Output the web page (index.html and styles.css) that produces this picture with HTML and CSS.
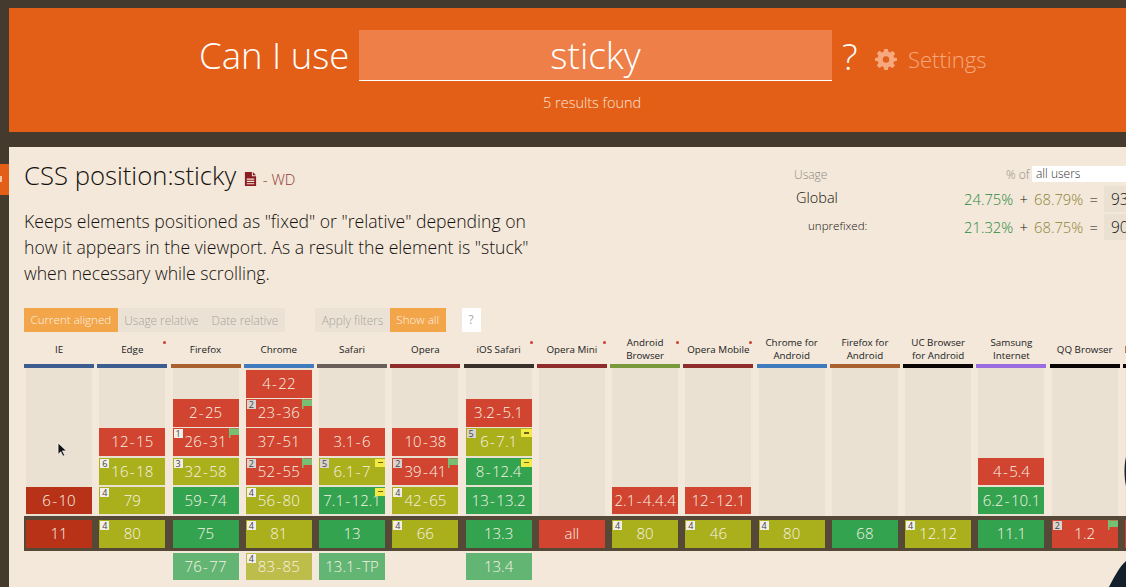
FILE: index.html
```html
<!DOCTYPE html>
<html lang="en">
<head>
    <meta charset="UTF-8">
    <meta name="viewport" content="width=device-width, initial-scale=1.0">
    <title>Can I use... sticky</title>
    <link rel="stylesheet" href="styles.css">
</head>
<body>
    <header class="site-header">
        <div class="search-row">
            <span class="can-i-use">Can I use</span>
            <div class="search-box">sticky</div>
            <span class="question">?</span>
            <svg class="gear" viewBox="0 0 24 24"><path fill-rule="evenodd" d="M10 1h4l.6 3.2 1.9.8 2.7-1.8 2.8 2.8-1.8 2.7.8 1.9L24 11v3l-3.2.6-.8 1.900 1.800 2.700-2.800 2.800-2.700-1.800-1.900.8L14 24h-4l-.6-3.200-1.900-.8-2.700 1.800L2 19l1.800-2.700-.8-1.900L0 14v-3l3-.6.8-1.900L2 5.800 4.800 3l2.700 1.800L9.400 4zM12 9a3.500 3.500 0 1 0 0 7 3.500 3.500 0 0 0 0-7z"/></svg>
            <span class="settings">Settings</span>
        </div>
        <div class="results">5 results found</div>
    </header>

    <div class="side-tab"></div>

    <main class="feature">
        <div class="feature-top">
            <div class="feature-info">
                <h1>CSS position:sticky
                    <svg class="doc-icon" viewBox="0 0 12 15"><path fill-rule="evenodd" d="M0 0h7.500v4.500H12V15H0zM8.500 0 12 3.500H8.500zM2 7h8v1.200H2zM2 9.500h8v1.200H2zM2 12h8v1.200H2z"/></svg>
                    <span class="status">- WD</span>
                </h1>
                <p class="description">Keeps elements positioned as "fixed" or "relative" depending on how it appears in the viewport. As a result the element is "stuck" when necessary while scrolling.</p>
            </div>
            <div class="usage">
                <div class="usage-head">
                    <span class="usage-label">Usage</span>
                    <span class="usage-of">% of</span>
                    <span class="usage-select">all users</span>
                </div>
                <div class="usage-row">
                    <span class="usage-name">Global</span>
                    <span class="pct-green">24.75%</span>
                    <span class="op">+</span>
                    <span class="pct-olive">68.79%</span>
                    <span class="op">=</span>
                    <span class="pct-total">93.54%</span>
                </div>
                <div class="usage-row">
                    <span class="usage-name sub">unprefixed:</span>
                    <span class="pct-green">21.32%</span>
                    <span class="op">+</span>
                    <span class="pct-olive">68.75%</span>
                    <span class="op">=</span>
                    <span class="pct-total">90.07%</span>
                </div>
            </div>
        </div>

        <div class="controls">
            <div class="btn-group">
                <span class="btn active">Current aligned</span>
                <span class="btn">Usage relative</span>
                <span class="btn">Date relative</span>
            </div>
            <div class="btn-group">
                <span class="btn">Apply filters</span>
                <span class="btn active">Show all</span>
            </div>
            <span class="help">?</span>
        </div>

        <div class="browsers">
            <div class="col">
                <div class="name">IE</div>
                <div class="bar blue-dark"></div>
                <div class="past">
                    <div class="cell dark-red">6 - 10</div>
                </div>
                <div class="current"><div class="cell dark-red">11</div></div>
            </div>

            <div class="col">
                <div class="name star">Edge</div>
                <div class="bar blue-dark"></div>
                <div class="past">
                    <div class="cell red">12 - 15</div>
                    <div class="cell yellow"><span class="note">6</span>16 - 18</div>
                    <div class="cell yellow"><span class="note">4</span>79</div>
                </div>
                <div class="current"><div class="cell yellow"><span class="note">4</span>80</div></div>
            </div>

            <div class="col">
                <div class="name">Firefox</div>
                <div class="bar orange"></div>
                <div class="past">
                    <div class="cell red">2 - 25</div>
                    <div class="cell red"><span class="note">1</span><svg class="flag" viewBox="0 0 10 10"><path d="M0 0h1.500v10H0zM1.500 .5H10v6.500H1.500z"/></svg>26 - 31</div>
                    <div class="cell yellow"><span class="note">3</span>32 - 58</div>
                    <div class="cell green">59 - 74</div>
                </div>
                <div class="current"><div class="cell green">75</div></div>
                <div class="future"><div class="cell green-light">76 - 77</div></div>
            </div>

            <div class="col">
                <div class="name">Chrome</div>
                <div class="bar blue"></div>
                <div class="past">
                    <div class="cell red">4 - 22</div>
                    <div class="cell red"><span class="note dim">2</span><svg class="flag" viewBox="0 0 10 10"><path d="M0 0h1.500v10H0zM1.500 .5H10v6.500H1.500z"/></svg>23 - 36</div>
                    <div class="cell red">37 - 51</div>
                    <div class="cell red"><span class="note dim">2</span><svg class="flag" viewBox="0 0 10 10"><path d="M0 0h1.500v10H0zM1.500 .5H10v6.500H1.500z"/></svg>52 - 55</div>
                    <div class="cell yellow"><span class="note">4</span>56 - 80</div>
                </div>
                <div class="current"><div class="cell yellow"><span class="note">4</span>81</div></div>
                <div class="future"><div class="cell yellow-light"><span class="note">4</span>83 - 85</div></div>
            </div>

            <div class="col">
                <div class="name">Safari</div>
                <div class="bar grey"></div>
                <div class="past">
                    <div class="cell red">3.1 - 6</div>
                    <div class="cell yellow"><span class="note dim">5</span><span class="minus"></span>6.1 - 7</div>
                    <div class="cell green"><span class="minus"></span>7.1 - 12.1</div>
                </div>
                <div class="current"><div class="cell green">13</div></div>
                <div class="future"><div class="cell green-light">13.1 - TP</div></div>
            </div>

            <div class="col">
                <div class="name">Opera</div>
                <div class="bar maroon"></div>
                <div class="past">
                    <div class="cell red">10 - 38</div>
                    <div class="cell red"><span class="note dim">2</span><svg class="flag" viewBox="0 0 10 10"><path d="M0 0h1.500v10H0zM1.500 .5H10v6.500H1.500z"/></svg>39 - 41</div>
                    <div class="cell yellow"><span class="note">4</span>42 - 65</div>
                </div>
                <div class="current"><div class="cell yellow"><span class="note">4</span>66</div></div>
            </div>

            <div class="col">
                <div class="name star">iOS Safari</div>
                <div class="bar charcoal"></div>
                <div class="past">
                    <div class="cell red">3.2 - 5.1</div>
                    <div class="cell yellow"><span class="note dim">5</span><span class="minus"></span>6 - 7.1</div>
                    <div class="cell green"><span class="minus"></span>8 - 12.4</div>
                    <div class="cell green">13 - 13.2</div>
                </div>
                <div class="current"><div class="cell green">13.3</div></div>
                <div class="future"><div class="cell green-light">13.4</div></div>
            </div>

            <div class="col">
                <div class="name star">Opera Mini</div>
                <div class="bar maroon"></div>
                <div class="past"></div>
                <div class="current"><div class="cell red">all</div></div>
            </div>

            <div class="col">
                <div class="name star">Android Browser</div>
                <div class="bar olive"></div>
                <div class="past">
                    <div class="cell red">2.1 - 4.4.4</div>
                </div>
                <div class="current"><div class="cell yellow"><span class="note">4</span>80</div></div>
            </div>

            <div class="col">
                <div class="name star">Opera Mobile</div>
                <div class="bar maroon"></div>
                <div class="past">
                    <div class="cell red">12 - 12.1</div>
                </div>
                <div class="current"><div class="cell yellow"><span class="note">4</span>46</div></div>
            </div>

            <div class="col">
                <div class="name">Chrome for Android</div>
                <div class="bar blue"></div>
                <div class="past"></div>
                <div class="current"><div class="cell yellow"><span class="note">4</span>80</div></div>
            </div>

            <div class="col">
                <div class="name">Firefox for Android</div>
                <div class="bar orange"></div>
                <div class="past"></div>
                <div class="current"><div class="cell green">68</div></div>
            </div>

            <div class="col">
                <div class="name">UC Browser<br>for Android</div>
                <div class="bar black"></div>
                <div class="past"></div>
                <div class="current"><div class="cell yellow"><span class="note">4</span>12.12</div></div>
            </div>

            <div class="col">
                <div class="name">Samsung Internet</div>
                <div class="bar purple"></div>
                <div class="past">
                    <div class="cell red">4 - 5.4</div>
                    <div class="cell green">6.2 - 10.1</div>
                </div>
                <div class="current"><div class="cell green">11.1</div></div>
            </div>

            <div class="col">
                <div class="name">QQ Browser</div>
                <div class="bar black"></div>
                <div class="past"></div>
                <div class="current"><div class="cell red"><span class="note dim">2</span><svg class="flag" viewBox="0 0 10 10"><path d="M0 0h1.500v10H0zM1.500 .5H10v6.500H1.500z"/></svg>1.2</div></div>
            </div>

            <div class="col">
                <div class="name nowrap">Baidu Browser</div>
                <div class="bar black"></div>
                <div class="past"></div>
                <div class="current"><div class="cell red"></div></div>
            </div>
        </div>
    </main>

    <!-- mouse pointer and the presenter's shoulder, both sit on top of the page -->
    <svg class="pointer" viewBox="0 0 12 18"><path d="M1 1v13l3-3 2.500 5 2-1-2.500-5h4.500z" fill="#111" stroke="#fff" stroke-width=".8"/></svg>
    <svg class="presenter" viewBox="0 0 20 130"><path d="M20 0c-2 8-2 20 0 29zM20 104C14 109 8 120 3 130h17z"/></svg>
</body>
</html>
```

FILE: styles.css
```css
body {
    font-family: "Open Sans", "Liberation Sans", sans-serif;
    background-color: #453a2e;
    margin: 0;
    padding: 8px 0 0 9px;
    height: 579px;
    overflow: hidden;
    position: relative;
}

.site-header {
    height: 124px;
    background-color: #e35f17;
    color: #fff;
    box-sizing: border-box;
    padding-top: 22px;
}

.search-row {
    display: flex;
    align-items: center;
    padding-left: 190px;
    height: 51px;
}

.search-row > * {
    flex: none;
}

.can-i-use {
    font-size: 36.5px;
    font-weight: 300;
    width: 160px;
    margin-top: -1px;
    white-space: nowrap;
}

.search-box {
    width: 473px;
    height: 51px;
    box-sizing: border-box;
    background-color: #ee7f48;
    border-bottom: 1px solid #fff;
    font-size: 37px;
    font-weight: 300;
    line-height: 50px;
    text-align: center;
    color: #fff;
}

.question {
    font-size: 37px;
    font-weight: 300;
    margin-left: 10px;
    width: 33px;
}

.gear {
    width: 22px;
    height: 22px;
    fill: #f6a87e;
    margin-top: 6px;
}

.settings {
    font-size: 22px;
    font-weight: 300;
    color: #f6a87e;
    margin-left: 11px;
    margin-top: 6px;
}

.results {
    margin-top: 12px;
    padding-left: 534px;
    font-size: 14.5px;
    font-weight: 300;
    color: #fbe3d3;
}

.side-tab {
    position: absolute;
    left: 0;
    top: 164px;
    width: 9px;
    height: 31px;
    background-color: #e35f17;
}

.side-tab::after {
    content: "";
    position: absolute;
    left: 0;
    top: 12px;
    width: 2px;
    height: 6px;
    background-color: #f6c3a4;
}

.feature {
    margin-top: 15px;
    height: 440px;
    background-color: #f3e8da;
    padding-left: 15px;
    overflow: hidden;
    color: #14100d;
}

.feature-top {
    display: flex;
    height: 160.5px;
}

.feature-info {
    width: 520px;
    flex: none;
}

h1 {
    font-size: 25.7px;
    font-weight: 300;
    margin: 11px 0 0;
    line-height: 36px;
    white-space: nowrap;
}

.doc-icon {
    width: 13px;
    height: 14px;
    fill: #8b1d22;
    margin-left: 1px;
    vertical-align: -1px;
}

.status {
    font-size: 15px;
    color: #8f3a35;
    margin-left: -1px;
}

.description {
    font-size: 17.6px;
    font-weight: 300;
    line-height: 26px;
    margin: 11px 0 0;
}

.usage {
    margin: 19px 0 0 250px;
    width: 400px;
    flex: none;
}

.usage-head {
    display: flex;
    align-items: center;
    height: 16px;
    font-size: 12px;
    font-weight: 300;
    color: #8f8a82;
}

.usage-label {
    width: 212px;
}

.usage-of {
    width: 26px;
}

.usage-select {
    width: 130px;
    height: 16px;
    line-height: 16px;
    background-color: #fff;
    color: #333;
    padding-left: 4px;
}

.usage-row {
    display: flex;
    align-items: center;
    font-size: 14.8px;
    font-weight: 300;
    margin-top: 4px;
    height: 26px;
}

.usage-row + .usage-row {
    margin-top: 2px;
}

.usage-name {
    width: 170px;
    flex: none;
    padding-left: 2px;
    margin-top: -3px;
    box-sizing: border-box;
    font-size: 14.5px;
}

.usage-name.sub {
    font-size: 11.6px;
    padding-left: 14px;
}

.pct-green {
    color: #2a8a40;
    width: 49.5px;
    flex: none;
}

.pct-olive {
    color: #8f8436;
    width: 49.5px;
    flex: none;
}

.op {
    width: 20.5px;
    flex: none;
    text-align: center;
}

.pct-total {
    background-color: #ebe1d3;
    padding: 0 7px;
    line-height: 26px;
    font-size: 15.5px;
}

.controls {
    display: flex;
    height: 24px;
}

.btn-group {
    display: flex;
    margin-right: 30.5px;
    background-color: #ebe2d5;
}

.btn-group + .btn-group {
    margin-right: 16px;
}

.btn {
    font-size: 11.8px;
    font-weight: 300;
    line-height: 24px;
    padding: 0 6.500px;
    color: #a8a39b;
}

.btn.active {
    font-size: 11.6px;
    background-color: #f3a54a;
    color: #fdf3e3;
}

.help {
    width: 19px;
    height: 24px;
    line-height: 24px;
    background-color: #fff;
    color: #aaa;
    font-size: 12px;
    text-align: center;
}

.browsers {
    display: flex;
    margin-top: 4.5px;
}

.col {
    width: 73.27px;
    flex: none;
}

.name {
    height: 28px;
    box-sizing: border-box;
    padding-bottom: 2px;
    margin-right: 3.27px;
    display: flex;
    align-items: center;
    justify-content: center;
    text-align: center;
    font-size: 9.8px;
    line-height: 13px;
    color: #222;
    position: relative;
}

.name.nowrap {
    white-space: nowrap;
}

/* little red dot next to the name */
.name.star::after {
    content: "";
    position: absolute;
    right: 1px;
    top: 4.5px;
    width: 3px;
    height: 3px;
    border-radius: 50%;
    background-color: #c8402c;
}

.bar {
    height: 4px;
    margin-right: 3.27px;
}

.blue-dark { background-color: #3d5c8f; }
.orange { background-color: #a9612f; }
.blue { background-color: #3f7bbd; }
.grey { background-color: #6a5f5a; }
.maroon { background-color: #8f2c2c; }
.charcoal { background-color: #3a302a; }
.olive { background-color: #789a3d; }
.black { background-color: #0a0505; }
.purple { background-color: #9a6ce0; }

.past {
    height: 148px;
    box-sizing: border-box;
    margin: 0 5.27px 0 2px;
    padding-bottom: 1.7px;
    background-color: #ebe1d3;
    display: flex;
    flex-direction: column;
    justify-content: flex-end;
    gap: 1.7px;
}

.current {
    background-color: #554836;
    padding: 4px 5.27px 3.5px 2px;
}

.future {
    margin: 1.7px 5.27px 0 2px;
}

.cell {
    height: 27.5px;
    line-height: 27.5px;
    text-align: center;
    font-size: 15px;
    font-weight: 300;
    word-spacing: -2.5px;
    color: #f9f2e4;
    position: relative;
    white-space: nowrap;
}

.red { background-color: #d04430; }
.dark-red { background-color: #b83218; }
.yellow { background-color: #a9b01c; }
.green { background-color: #33a350; }
.green-light { background-color: #63b573; }
.yellow-light { background-color: #bcbd4a; }

.note {
    position: absolute;
    left: 1px;
    top: 1px;
    width: 9px;
    height: 9px;
    background-color: #f2efe8;
    color: #444;
    font-size: 9px;
    font-weight: 400;
    line-height: 9px;
}

.note.dim {
    background-color: #d8d3ce;
}

.flag {
    position: absolute;
    right: 0;
    top: 0;
    width: 10px;
    height: 10px;
    fill: #78bf73;
}

.minus {
    position: absolute;
    right: 0;
    top: 1px;
    width: 10.500px;
    height: 8px;
    background-color: #f3ea45;
}

.minus::after {
    content: "";
    position: absolute;
    left: 3px;
    top: 3px;
    width: 5px;
    height: 1.500px;
    background-color: #6a6420;
}

.pointer {
    position: absolute;
    left: 57px;
    top: 442px;
    width: 11px;
    height: 16px;
}

.presenter {
    position: absolute;
    right: 0;
    top: 457px;
    width: 20px;
    height: 130px;
    fill: #14202c;
}
```
